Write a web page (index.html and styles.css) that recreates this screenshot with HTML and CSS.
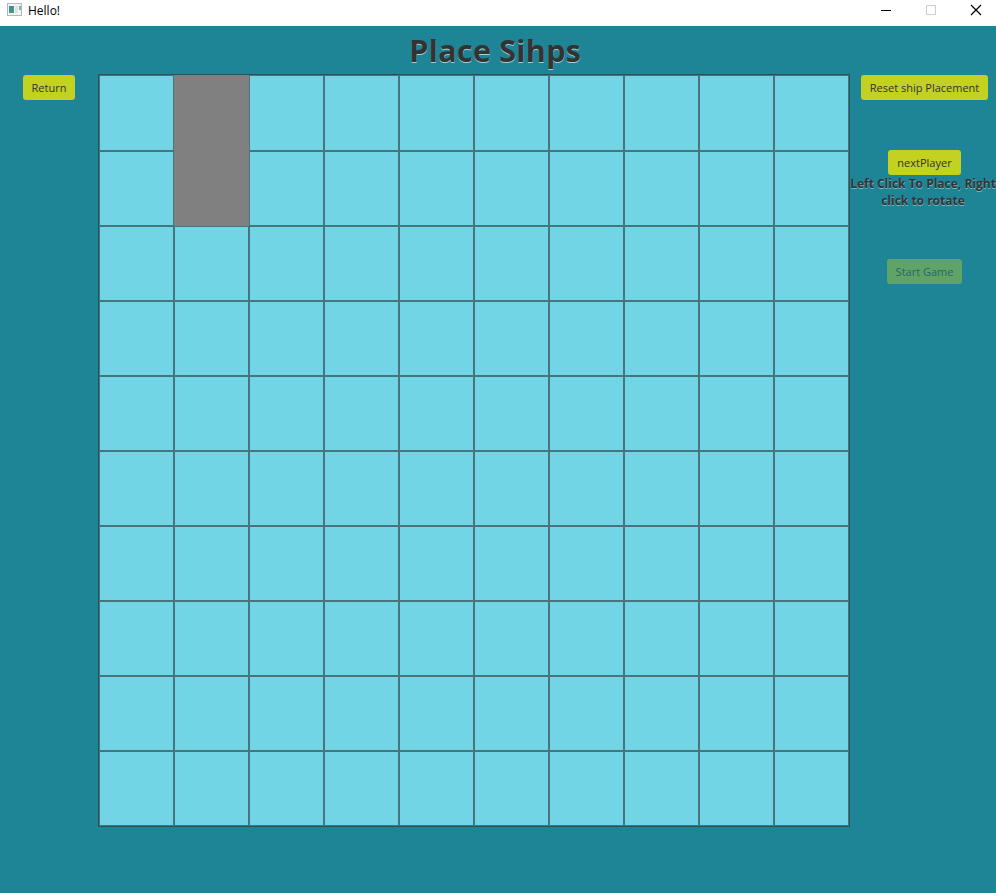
FILE: index.html
```html
<!DOCTYPE html>
<html lang="en">
<head>
<meta charset="utf-8">
<title>Hello!</title>
<link rel="stylesheet" href="styles.css">
</head>
<body>
<header class="titlebar">
  <svg class="app-icon" width="16" height="14" viewBox="0 0 16 14" aria-hidden="true">
    <defs><linearGradient id="pane" x1="0" y1="0" x2="1" y2="1"><stop offset="0" stop-color="#4a7bb0"/><stop offset="1" stop-color="#49a56c"/></linearGradient></defs>
    <rect x="0.5" y="0.5" width="14" height="12" fill="#f4f4f4" stroke="#b4b8bb"/>
    <rect x="2" y="3" width="5" height="7" fill="url(#pane)"/>
    <rect x="8" y="3" width="3" height="7" fill="#dfe3e6"/>
    <rect x="12" y="3" width="2" height="4" fill="#7fb7a0"/>
  </svg>
  <span class="window-name">Hello!</span>
  <div class="window-controls">
    <button class="window-button" aria-label="Minimize"><svg width="12" height="12" viewBox="0 0 12 12"><path d="M1 6.5h10" stroke="#000"/></svg></button>
    <button class="window-button" aria-label="Maximize" disabled><svg width="12" height="12" viewBox="0 0 12 12"><path d="M1.500 1.500h9v9h-9z" fill="none" stroke="#ccc"/></svg></button>
    <button class="window-button" aria-label="Close"><svg width="12" height="12" viewBox="0 0 12 12"><path d="M1 1l10 10M11 1L1 11" stroke="#000" stroke-width="1.200"/></svg></button>
  </div>
</header>
<main class="scene">
  <h1 class="heading">Place Sihps</h1>
  <div class="layout">
    <div class="side"><button class="action">Return</button></div>
    <div class="board" id="board"><div class="ship"></div></div>
    <div class="side side-right">
      <button class="action">Reset ship Placement</button>
      <div class="turn">
        <button class="action">nextPlayer</button>
        <p class="hint">Left Click To Place, Right click to rotate</p>
      </div>
      <button class="action" disabled>Start Game</button>
    </div>
  </div>
</main>
<script src="board.js"></script>
</body>
</html>
```
FILE: styles.css
```css
* { box-sizing: border-box; }
body {
  margin: 0;
  min-height: 100vh;
  display: flex;
  flex-direction: column;
  background: #1e8596;
  color: #333;
  font: 12px/17px "Open Sans", "Noto Sans", sans-serif;
}
.titlebar {
  display: flex;
  align-items: center;
  height: 26px;
  padding: 0 0 6px 7px;
  gap: 5px;
  background: #fff;
  color: #000;
}
.window-controls { display: flex; margin-left: auto; }
.window-button {
  display: flex;
  align-items: center;
  justify-content: center;
  width: 45px;
  height: 20px;
  margin: 0;
  padding: 0 0 0 4px;
  border: 0;
  background: none;
}
.scene { flex: 1; }
.heading {
  margin: 0;
  height: 48px;
  padding-right: 6px;
  text-align: center;
  font: bold 31px/48px "Open Sans", "Noto Sans", sans-serif;
  text-shadow: 0 1px 0 #a5ced5;
}
.layout {
  display: grid;
  grid-template-columns: 98fr 752fr 146fr;
}
.side {
  display: flex;
  flex-direction: column;
  align-items: center;
  padding-top: 1px;
}
.side-right { gap: 50px; }
.turn { display: flex; flex-direction: column; align-items: center; }
.action {
  height: 25px;
  padding: 0 9px;
  border: 0;
  border-radius: 3px;
  background: #c3d121;
  color: #333;
  font: 11px/17px "Open Sans", "Noto Sans", sans-serif;
  white-space: nowrap;
}
.side-right .action { margin-left: 3px; }
.action:disabled { opacity: 0.4; }
.hint {
  margin: 0;
  text-align: center;
  font-weight: bold;
  text-shadow: 0 1px 0 #7fb5bf;
}
.board {
  display: grid;
  grid-template-columns: repeat(10, 1fr);
  grid-template-rows: 74fr repeat(9, 73fr);
  gap: 2px;
  aspect-ratio: 752 / 753;
  border: 1px solid #29535c;
  padding: 1px;
  background: #46757e;
}
.cell { background: #71d5e5; }
.ship {
  grid-area: 1 / 2 / 3 / 3;
  z-index: 1;
  margin: -1px;
  background: #808080;
}
```
FILE: board.js
```js
const board = document.getElementById("board");
for (let row = 1; row <= 10; row++) {
  for (let col = 1; col <= 10; col++) {
    const cell = document.createElement("div");
    cell.className = "cell";
    cell.style.gridArea = `${row} / ${col}`;
    board.append(cell);
  }
}
```
